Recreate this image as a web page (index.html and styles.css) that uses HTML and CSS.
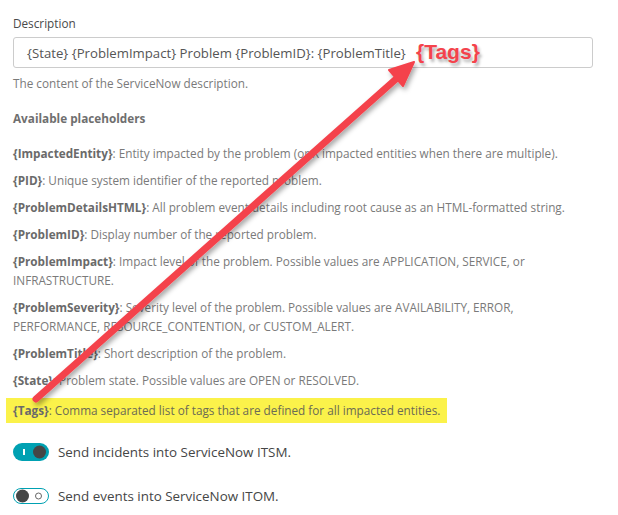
FILE: index.html
```html
<!DOCTYPE html>
<html>
<head>
<meta charset="utf-8">
<link rel="stylesheet" href="styles.css">
</head>
<body>
<div class="page">
  <div class="field">
    <label class="label">Description</label>
    <div class="input">
      <span class="input-text">{State} {ProblemImpact} Problem {ProblemID}: {ProblemTitle}</span>
      <span class="tags-note">{Tags}</span>
    </div>
    <p class="hint">The content of the ServiceNow description.</p>
  </div>

  <h4 class="section">Available placeholders</h4>
  <ul class="placeholders">
    <li><b>{ImpactedEntity}</b>: Entity impacted by the problem (or X impacted entities when there are multiple).</li>
    <li><b>{PID}</b>: Unique system identifier of the reported problem.</li>
    <li><b>{ProblemDetailsHTML}</b>: All problem event details including root cause as an HTML-formatted string.</li>
    <li><b>{ProblemID}</b>: Display number of the reported problem.</li>
    <li><b>{ProblemImpact}</b>: Impact level of the problem. Possible values are APPLICATION, SERVICE, or INFRASTRUCTURE.</li>
    <li><b>{ProblemSeverity}</b>: Severity level of the problem. Possible values are AVAILABILITY, ERROR, PERFORMANCE, RESOURCE_CONTENTION, or CUSTOM_ALERT.</li>
    <li><b>{ProblemTitle}</b>: Short description of the problem.</li>
    <li><b>{State}</b>: Problem state. Possible values are OPEN or RESOLVED.</li>
    <li class="highlight"><b>{Tags}</b>: Comma separated list of tags that are defined for all impacted entities.</li>
  </ul>

  <div class="toggle-row">
    <span class="switch on"><span class="mark"></span><span class="knob"></span></span>
    <span class="toggle-label">Send incidents into ServiceNow ITSM.</span>
  </div>
  <div class="toggle-row">
    <span class="switch off"><span class="knob"></span><span class="ring"></span></span>
    <span class="toggle-label">Send events into ServiceNow ITOM.</span>
  </div>

  <svg class="arrow" width="618" height="515" viewBox="0 0 618 515">
    <defs>
      <filter id="sh" x="-20%" y="-20%" width="140%" height="140%">
        <feDropShadow dx="2" dy="3" stdDeviation="2.5" flood-color="#000" flood-opacity="0.35"/>
      </filter>
    </defs>
    <g filter="url(#sh)" fill="#f4434c" stroke="#f4434c">
      <line x1="36" y1="399" x2="396" y2="79" stroke-width="7" stroke-linecap="round"/>
      <polygon points="414,62 389,70 403,86" stroke-width="2" stroke-linejoin="round"/>
    </g>
  </svg>
</div>
</body>
</html>
```
FILE: styles.css
```css
* { box-sizing: border-box; }
html, body { margin: 0; padding: 0; background: #fff; }
body {
  font-family: "Open Sans", "Noto Sans", sans-serif;
  color: #6f6f6f;
  width: 618px;
  height: 515px;
  overflow: hidden;
}
.page {
  position: relative;
  padding: 15px 25px 0 13px;
}
.label {
  display: block;
  font-size: 11.75px;
  line-height: 16px;
  color: #4a4a4a;
}
.input {
  position: relative;
  margin-top: 6px;
  height: 31px;
  width: 580px;
  border: 1px solid #cccccc;
  border-radius: 3px;
  padding: 0 13px;
  display: flex;
  align-items: center;
  font-size: 13.2px;
  color: #555;
}
.tags-note {
  position: absolute;
  left: 402px;
  top: 0px;
  font-family: "Liberation Sans", Arial, sans-serif;
  font-weight: bold;
  font-size: 21px;
  line-height: 28px;
  color: #f4434c;
  text-shadow: 2px 3px 3px rgba(0,0,0,0.3);
}
.hint {
  margin: 7px 0 0;
  font-size: 11.75px;
  line-height: 16px;
  color: #7a7a7a;
}
.section {
  margin: 19px 0 0;
  font-size: 11.75px;
  line-height: 16px;
  font-weight: bold;
  color: #6f6f6f;
}
.placeholders {
  list-style: none;
  margin: 18px 0 0;
  padding: 0;
  font-size: 11.75px;
  line-height: 19px;
  color: #7a7a7a;
}
.placeholders li {
  margin-bottom: 8px;
}
.placeholders b { color: #6a6a6a; }
.placeholders li.highlight {
  background: #fbf24a;
  margin-left: -7px;
  padding: 3px 0 3px 7px;
  width: 441px;
  white-space: nowrap;
  color: #6b6b55;
}
.toggle-row {
  display: flex;
  align-items: center;
  gap: 9px;
  margin-top: 20px;
}
.toggle-row + .toggle-row { margin-top: 26px; }
.switch {
  position: relative;
  width: 36px;
  height: 18px;
  border-radius: 9px;
  flex: none;
}
.switch.on { background: #00a1b2; }
.switch.off { background: #fff; border: 1.5px solid #00a1b2; height: 16px; }
.switch .knob {
  position: absolute;
  width: 13px;
  height: 13px;
  border-radius: 50%;
  background: #454646;
  top: 50%;
  transform: translateY(-50%);
}
.switch.on .knob { right: 3px; }
.switch.off .knob { left: 2px; }
.switch .mark {
  position: absolute;
  left: 10px;
  top: 6px;
  width: 1.5px;
  height: 6px;
  background: #fff;
}
.switch .ring {
  position: absolute;
  right: 6px;
  top: 50%;
  transform: translateY(-50%);
  width: 7px;
  height: 7px;
  border-radius: 50%;
  border: 1px solid #666;
}
.toggle-label {
  font-size: 13.4px;
  color: #454646;
}
.arrow {
  position: absolute;
  left: 0;
  top: 0;
  pointer-events: none;
}
```
